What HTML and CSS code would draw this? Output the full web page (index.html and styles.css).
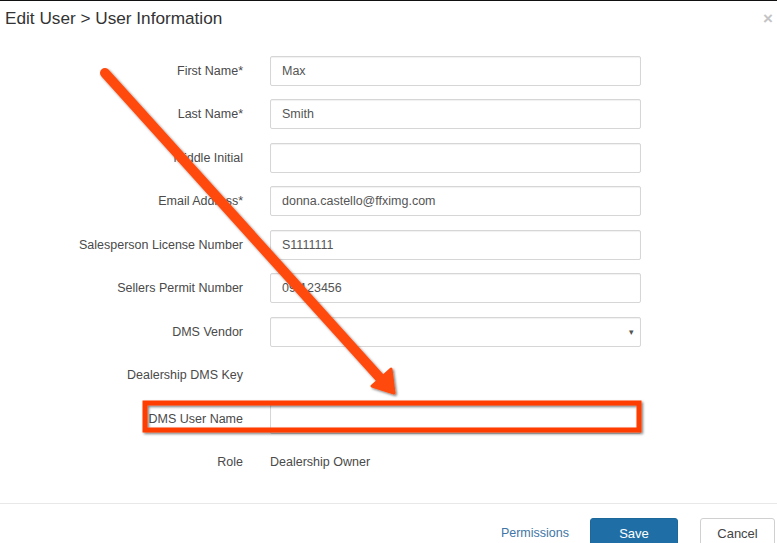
FILE: index.html
```html
<!DOCTYPE html>
<html>
<head>
<meta charset="utf-8">
<link rel="stylesheet" href="styles.css">
</head>
<body>
<div class="modal">
  <div class="modal-header">
    <h4 class="title">Edit User &gt; User Information</h4>
    <span class="close">&times;</span>
  </div>
  <div class="modal-body">
    <div class="row"><label class="lbl">First Name*</label><div class="input">Max</div></div>
    <div class="row"><label class="lbl">Last Name*</label><div class="input">Smith</div></div>
    <div class="row"><label class="lbl">Middle Initial</label><div class="input"></div></div>
    <div class="row"><label class="lbl">Email Address*</label><div class="input">donna.castello@ffximg.com</div></div>
    <div class="row"><label class="lbl">Salesperson License Number</label><div class="input">S1111111</div></div>
    <div class="row"><label class="lbl">Sellers Permit Number</label><div class="input">09-123456</div></div>
    <div class="row"><label class="lbl">DMS Vendor</label><div class="input select"><span class="caret">&#9662;</span></div></div>
    <div class="row"><label class="lbl">Dealership DMS Key</label><div class="static"></div></div>
    <div class="row"><label class="lbl">DMS User Name</label><div class="input"></div></div>
    <div class="row"><label class="lbl">Role</label><div class="static">Dealership Owner</div></div>
  </div>
  <div class="modal-footer">
    <a class="link">Permissions</a>
    <button class="btn btn-primary">Save</button>
    <button class="btn btn-default">Cancel</button>
  </div>
  <svg class="annot" width="777" height="543" viewBox="0 0 777 543">
    <defs>
      <filter id="sh" x="-10%" y="-10%" width="120%" height="130%">
        <feDropShadow dx="1.5" dy="1.5" stdDeviation="1" flood-color="#000" flood-opacity="0.5"/>
      </filter>
    </defs>
    <g filter="url(#sh)">
      <line x1="105" y1="73" x2="380" y2="378" stroke="#ff4a0e" stroke-width="10" stroke-linecap="round"/>
      <polygon points="394,393 372,386 391,369" fill="#ff4a0e" stroke="#ff4a0e" stroke-width="3" stroke-linejoin="round"/>
      <rect x="145" y="403" width="494" height="27" fill="none" stroke="#ff3c06" stroke-width="5"/>
    </g>
  </svg>
</div>
</body>
</html>
```
FILE: styles.css
```css
html, body {
  margin: 0;
  padding: 0;
  background: #fff;
}
body {
  font-family: "Liberation Sans", Arial, sans-serif;
  color: #333;
  font-size: 12px;
}
.modal {
  position: relative;
  width: 777px;
  height: 543px;
  overflow: hidden;
  border-top: 1px solid #111;
  box-sizing: border-box;
}
.modal-header {
  display: flex;
  justify-content: space-between;
  align-items: flex-start;
  padding: 7px 4px 0 5px;
  height: 48px;
  box-sizing: border-box;
}
.title {
  margin: 0;
  font-size: 17.2px;
  font-weight: normal;
  color: #333;
  line-height: 20px;
}
.close {
  color: #c4c4c4;
  font-size: 17px;
  font-weight: bold;
  line-height: 14px;
  margin-top: 4px;
}
.modal-body {
  display: flex;
  flex-direction: column;
  gap: 13.45px;
  padding-top: 7px;
  height: 455px;
  box-sizing: border-box;
  border-bottom: 1px solid #e8e8e8;
}
.row {
  display: grid;
  grid-template-columns: 243px 371px;
  column-gap: 27px;
  height: 30px;
  align-items: center;
}
.lbl {
  text-align: right;
  color: #4a4a4a;
  font-size: 12.5px;
}
.input {
  height: 30px;
  box-sizing: border-box;
  border: 1px solid #d6d6d6;
  border-radius: 2px;
  box-shadow: inset 0 1px 1px rgba(0,0,0,0.06);
  padding: 0 11px;
  line-height: 28px;
  color: #555;
  font-size: 12.5px;
  display: flex;
  align-items: center;
}
.select {
  justify-content: flex-end;
  padding-right: 6px;
}
.caret {
  font-size: 9px;
  color: #555;
}
.static {
  color: #4a4a4a;
  font-size: 12.5px;
}
.modal-footer {
  display: flex;
  justify-content: flex-end;
  align-items: center;
  gap: 21px;
  padding: 14px 2px 0 0;
}
.link {
  color: #3f76a5;
  font-size: 12.5px;
}
.btn {
  font-family: "Liberation Sans", Arial, sans-serif;
  font-size: 13px;
  height: 30px;
  border-radius: 3px;
  box-sizing: border-box;
}
.btn-primary {
  width: 88px;
  background: #1f6fa6;
  color: #fff;
  border: 1px solid #1c679b;
  margin-right: 1px;
}
.btn-default {
  width: 75px;
  background: #fff;
  color: #444;
  border: 1px solid #d0d0d0;
}
.annot {
  position: absolute;
  left: 0;
  top: -1px;
  pointer-events: none;
}
```
